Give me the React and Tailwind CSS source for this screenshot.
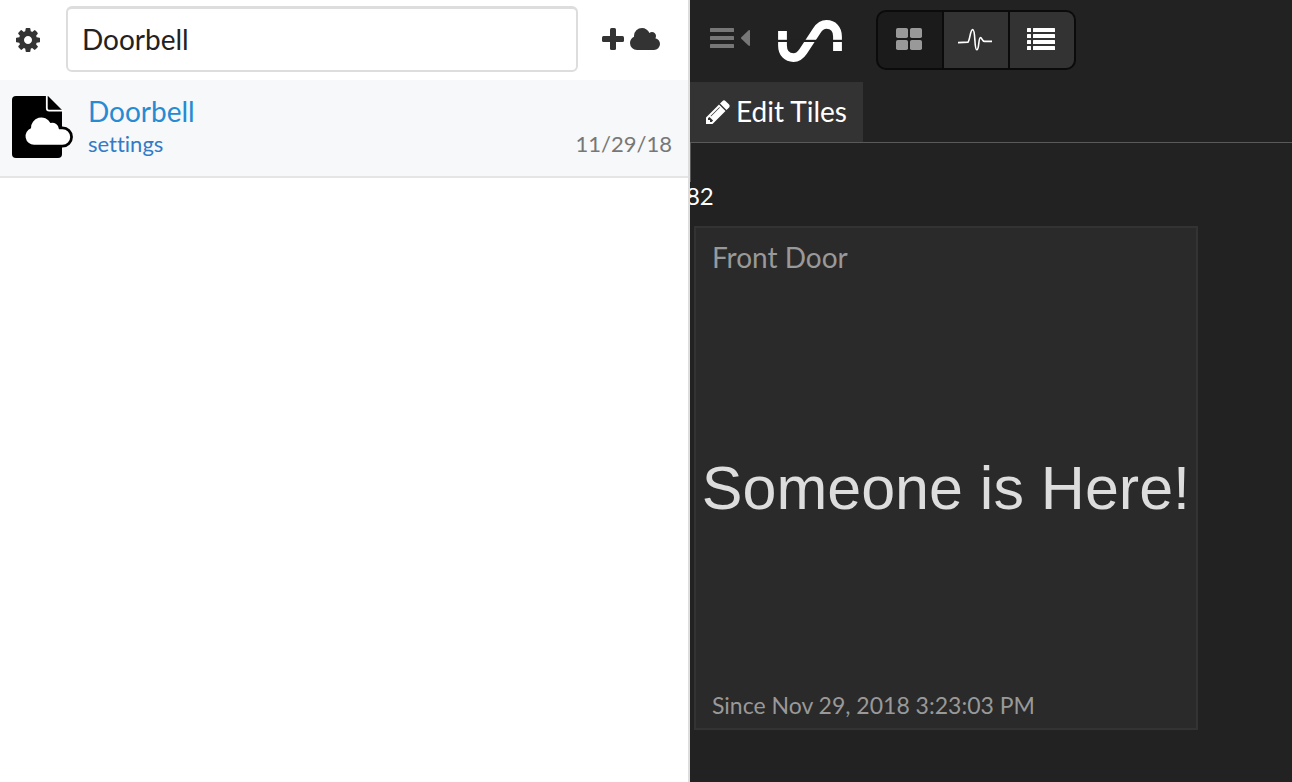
function GearIcon() {
  return (
    <svg viewBox="128 128 1536 1536" className="size-6 fill-[#333]" aria-hidden="true">
      <path d="M1152 896q0-106-75-181t-181-75-181 75-75 181 75 181 181 75 181-75 75-181zm512-109v222q0 12-8 23t-20 13l-185 28q-19 54-39 91 35 50 107 138 10 12 10 25t-9 23q-27 37-99 108t-94 71q-12 0-26-9l-138-108q-44 23-91 38-16 136-29 186-7 28-36 28h-222q-14 0-24.5-8.5t-11.5-21.5l-28-184q-49-16-90-37l-141 107q-10 9-25 9-14 0-25-11-126-114-165-168-7-10-7-23 0-12 8-23 15-21 51-66.5t54-70.5q-27-50-41-99l-183-27q-13-2-21-12.5t-8-23.5v-222q0-12 8-23t19-13l186-28q14-46 39-92-40-57-107-138-10-12-10-24 0-10 9-23 26-36 98.5-107.5t94.5-71.5q13 0 26 10l138 107q44-23 91-38 16-136 29-186 7-28 36-28h222q14 0 24.5 8.5t11.5 21.5l28 184q49 16 90 37l142-107q9-9 24-9 13 0 25 10 129 119 165 170 7 8 7 22 0 12-8 23-15 21-51 66.5t-54 70.5q26 50 41 98l183 28q13 2 21 12.5t8 23.5z" />
    </svg>
  );
}

function PlusIcon() {
  return (
    <svg viewBox="0 0 22 22" className="size-[22px] fill-[#333]" aria-hidden="true">
      <rect x="0" y="8" width="22" height="6" rx="1.5" />
      <rect x="8" y="0" width="6" height="22" rx="1.5" />
    </svg>
  );
}

function CloudIcon() {
  return (
    <svg viewBox="0 128 1920 1408" className="h-[22px] w-[30px] fill-[#333]" aria-hidden="true">
      <path d="M1920 1152q0 159-112.5 271.5t-271.5 112.5h-1088q-185 0-316.5-131.5t-131.5-316.5q0-132 71-241.5t187-163.5q-2-28-2-43 0-212 150-362t362-150q158 0 286.5 88t187.5 230q70-62 166-62 106 0 181 75t75 181q0 75-41 138 129 30 213 134.5t84 239.5z" />
    </svg>
  );
}

function CloudFileIcon() {
  return (
    <svg viewBox="0 0 62 62" className="size-[62px] shrink-0" aria-hidden="true">
      <path d="M4 0H36L50 14V58a4 4 0 0 1-4 4H4a4 4 0 0 1-4-4V4a4 4 0 0 1 4-4z" />
      <path d="M34.8 0V12.2a2.4 2.4 0 0 0 2.4 2.4H52" fill="none" stroke="#fff" strokeWidth="1.8" />
      <path
        d="M22 48.8A8.6 8.6 0 0 1 19 32.2A10.3 10.3 0 0 1 38.4 27A6.8 6.8 0 0 1 47 33.2H50.4A7.8 7.8 0 0 1 50.4 48.8z"
        fill="none"
        stroke="#000"
        strokeWidth="5.5"
      />
      <path
        d="M22 48.8A8.6 8.6 0 0 1 19 32.2A10.3 10.3 0 0 1 38.4 27A6.8 6.8 0 0 1 47 33.2H50.4A7.8 7.8 0 0 1 50.4 48.8z"
        fill="#fff"
      />
    </svg>
  );
}

function MenuIcon() {
  return (
    <svg viewBox="0 0 40 20" className="h-5 w-10 fill-[#777]" aria-hidden="true">
      <rect x="0" y="0" width="24" height="4" rx="0.6" />
      <rect x="0" y="8" width="24" height="4" rx="0.6" />
      <rect x="0" y="16" width="24" height="4" rx="0.6" />
      <path d="M31.3 9.2L38.4 2.4Q40 1.4 40 3V17Q40 18.6 38.4 17.6L31.3 10.8Q30.6 10 31.3 9.2z" />
    </svg>
  );
}

function Logo() {
  return (
    <svg viewBox="0 0 64 42" className="h-[42px] w-16" role="img" aria-label="Home">
      <path
        d="M4.5 11V25.5C4.5 33 9 37.6 15.5 37.6C20 37.6 22.8 35 25.2 31.4L38.8 10.6C41.2 7 44 4.4 48.5 4.4C55 4.4 59.5 9 59.5 16.5V31"
        fill="none"
        stroke="#fff"
        strokeWidth="8.8"
      />
      <rect x="0" y="19.8" width="64" height="2.2" fill="#222" />
    </svg>
  );
}

function TilesIcon() {
  return (
    <svg viewBox="0 0 26 22" className="h-[22px] w-[26px] fill-[#999]" aria-hidden="true">
      <rect x="0" y="0" width="12" height="10" rx="1.8" />
      <rect x="14" y="0" width="12" height="10" rx="1.8" />
      <rect x="0" y="12" width="12" height="10" rx="1.8" />
      <rect x="14" y="12" width="12" height="10" rx="1.8" />
    </svg>
  );
}

function PulseIcon() {
  return (
    <svg viewBox="0 0 34 24" className="h-6 w-[34px]" aria-hidden="true">
      <path
        d="M0 15.6L10 15.1C12 13 12.2 2.6 14.7 2.6C17.8 2.6 16 22.8 18.8 22.8C21.4 22.8 20.2 10.6 22.5 10.6C24 10.6 24 14.4 26.5 14.4H34"
        fill="none"
        stroke="#fff"
        strokeWidth="1.6"
      />
    </svg>
  );
}

function ListIcon() {
  return (
    <svg viewBox="0 0 28 22" className="h-[22px] w-7 fill-white" aria-hidden="true">
      {[0, 6, 12, 18].map((y) => (
        <g key={y}>
          <rect x="0" y={y} width="4" height="4" rx="0.5" />
          <rect x="6" y={y} width="22" height="4" rx="0.5" />
        </g>
      ))}
    </svg>
  );
}

function PencilIcon() {
  return (
    <svg viewBox="128 128 1536 1536" className="size-6 fill-white" aria-hidden="true">
      <path d="M491 1536l91-91-235-235-91 91v107h128v128h107zm523-928q0-22-22-22-10 0-17 7l-542 542q-7 7-7 17 0 22 22 22 10 0 17-7l542-542q7-7 7-17zm-54-192l416 416-832 832h-416v-416zm683 96q0 53-37 90l-166 166-416-416 166-165q36-38 90-38 53 0 91 38l235 234q37 39 37 91z" />
    </svg>
  );
}

function RulePane() {
  return (
    <section className="w-[53.4%] shrink-0 border-r-2 border-[#ddd] bg-white">
      <header className="flex h-20 items-center pt-1.5 pr-7 pb-2 pl-4">
        <button type="button" aria-label="Settings" className="pt-0.5">
          <GearIcon />
        </button>
        <input
          type="text"
          aria-label="Search"
          defaultValue="Doorbell"
          className="ml-[26px] h-[66px] min-w-0 flex-1 rounded-md border-2 border-t-3 border-[#ddd] px-3.5 pb-0.5 text-[28px] text-[#222] outline-none"
        />
        <button type="button" aria-label="Add cloud rule" className="ml-6 flex items-center gap-1.5">
          <PlusIcon />
          <CloudIcon />
        </button>
      </header>
      <article className="flex h-[98px] items-start border-b-2 border-[#e5e5e5] bg-[#f6f8fa] px-3 pt-4 pr-4">
        <CloudFileIcon />
        <div className="ml-3.5 flex-1">
          <a href="#doorbell" className="block text-[28px] leading-[30px] text-[#268bd2]">
            Doorbell
          </a>
          <div className="flex items-center justify-between leading-9">
            <a href="#settings" className="text-[22px] text-[#337ac7]">
              settings
            </a>
            <time className="text-[22px] text-[#777]">11/29/18</time>
          </div>
        </div>
      </article>
    </section>
  );
}

function Dashboard() {
  return (
    <main className="min-w-0 flex-1 overflow-hidden bg-[#222] text-white">
      <header className="flex h-[82px] items-start pt-2.5 pl-5">
        <button type="button" aria-label="Collapse menu" className="mt-[18px]">
          <MenuIcon />
        </button>
        <a href="#home" className="mt-2.5 ml-7">
          <Logo />
        </a>
        <div className="ml-[34px] flex h-[60px] gap-0.5 overflow-hidden rounded-[10px] border-2 border-[#0b0b0b] bg-[#0b0b0b]">
          <button type="button" aria-label="Tiles" className="grid w-16 place-items-center bg-[#1b1b1b] pr-0.5 pb-0.5">
            <TilesIcon />
          </button>
          <button type="button" aria-label="Activity" className="grid w-16 place-items-center bg-[#333] pr-0.5 pb-0.5">
            <PulseIcon />
          </button>
          <button type="button" aria-label="List" className="grid w-16 place-items-center bg-[#333] pr-0.5 pb-0.5">
            <ListIcon />
          </button>
        </div>
      </header>
      <nav className="flex h-[61px] border-b border-[#5a5a5a]">
        <button type="button" className="flex items-center gap-1.5 bg-[#333] px-4 text-[28px] leading-9">
          <PencilIcon />
          <span className="pb-0.5">Edit Tiles</span>
        </button>
      </nav>
      <div className="h-[39px] border-l border-[#5a5a5a]" />
      <div className="-ml-1 text-2xl leading-7">82</div>
      <article className="mt-4 ml-1 flex size-[504px] flex-col justify-between border-2 border-[#333] bg-[#2a2a2a] px-1 py-2">
        <h2 className="px-3 text-[28px] leading-[42px] text-[#999]">Front Door</h2>
        <p className="pt-2 text-center font-['Liberation_Sans',sans-serif] text-[61px] leading-[64px] whitespace-nowrap text-[#ddd]">
          Someone is Here!
        </p>
        <p className="px-3 text-[23px] leading-[30px] text-[#999]">Since Nov 29, 2018 3:23:03 PM</p>
      </article>
    </main>
  );
}

export default function App() {
  return (
    <div className="flex min-h-screen font-['Lato',sans-serif] [font-variant-ligatures:none]">
      <RulePane />
      <Dashboard />
    </div>
  );
}
